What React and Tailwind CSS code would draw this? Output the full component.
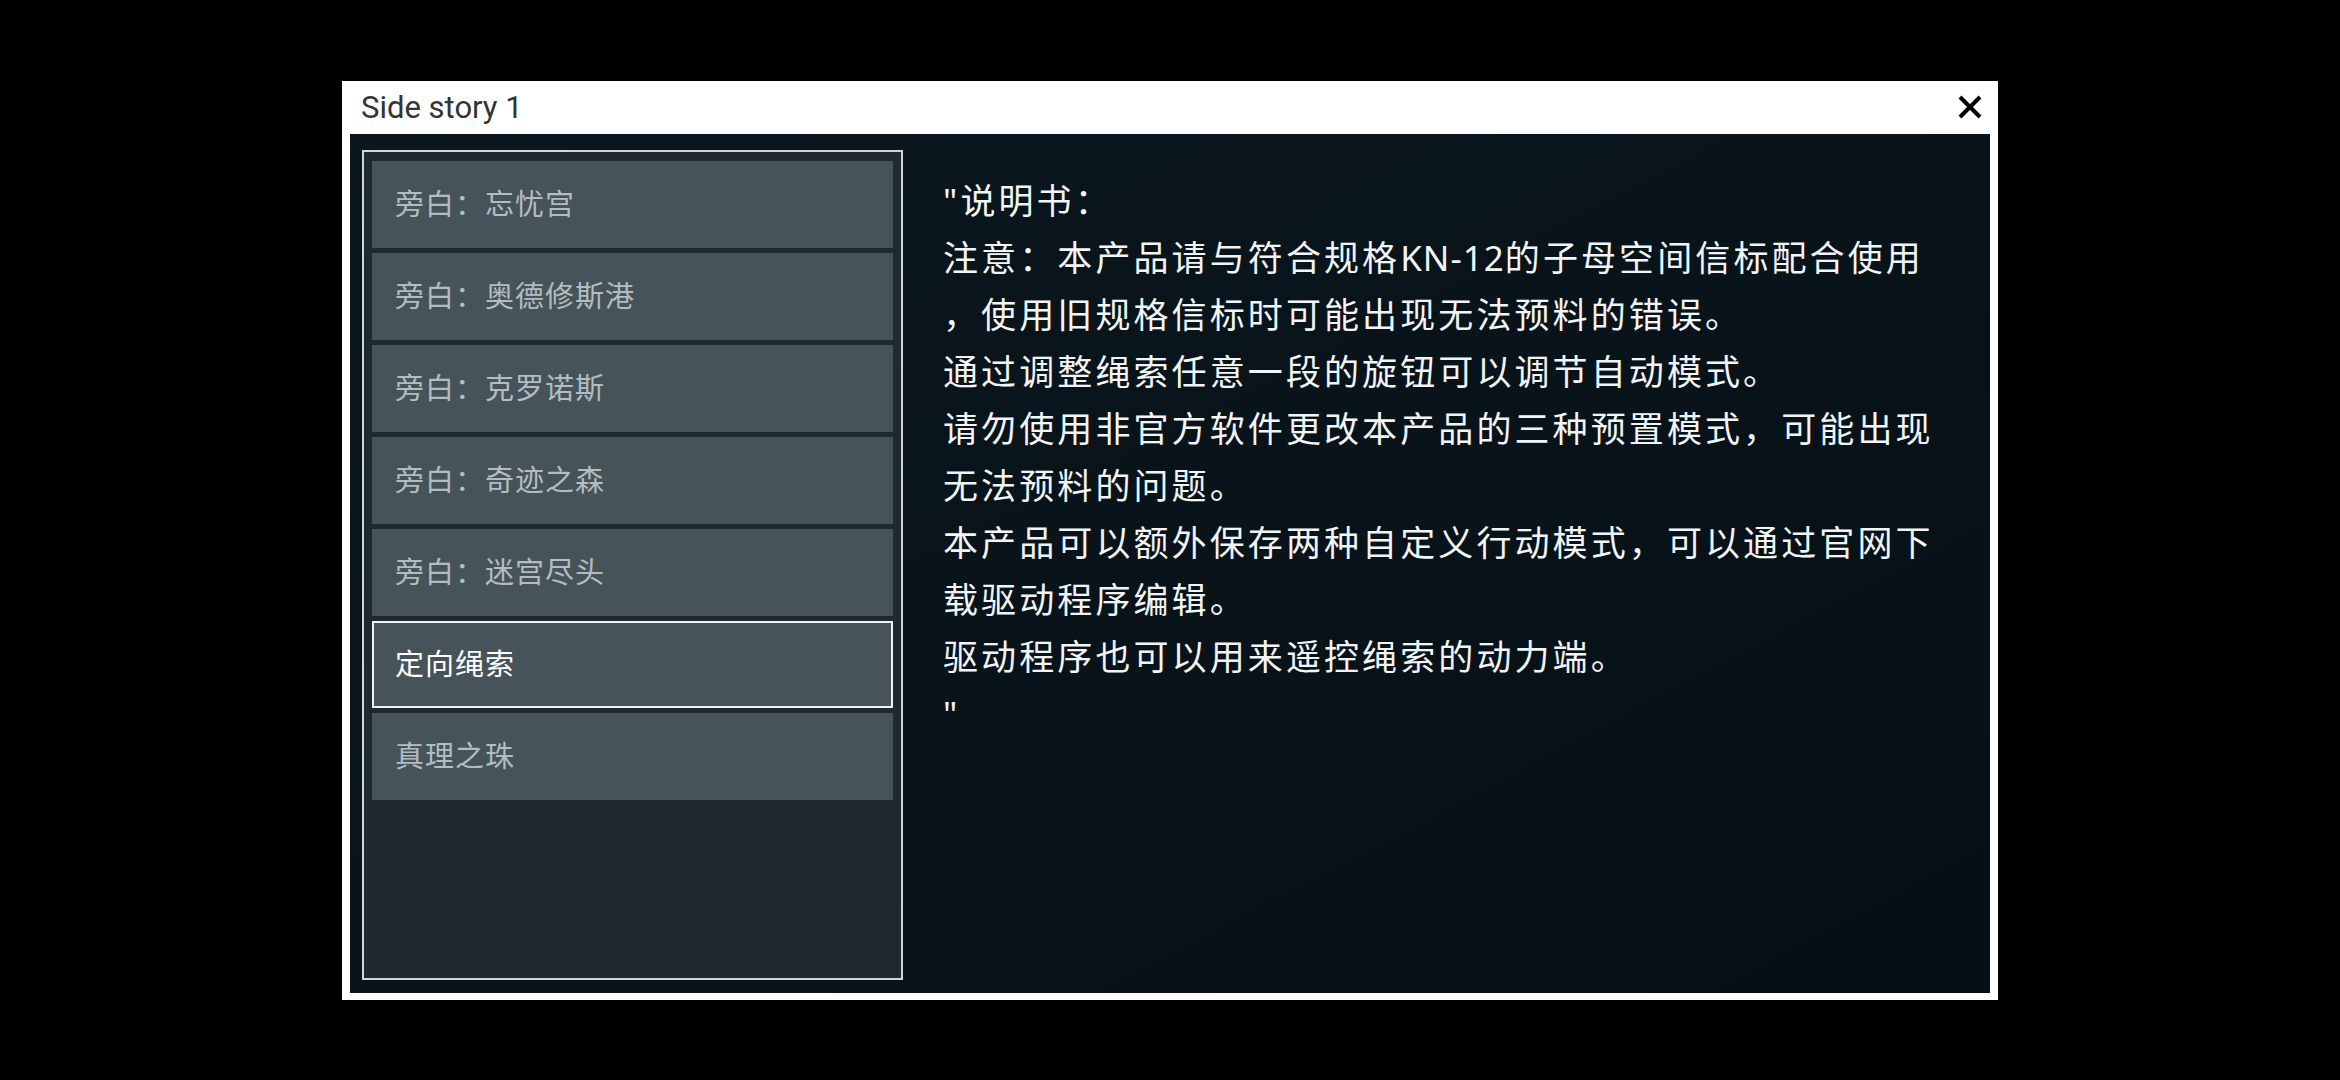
// ---------------------------- Data ----------------------------
const entries = [
    "旁白：忘忧宫",
    "旁白：奥德修斯港",
    "旁白：克罗诺斯",
    "旁白：奇迹之森",
    "旁白：迷宫尽头",
    "定向绳索",
    "真理之珠",
];

const selectedIndex = 5;

// each visual line of the reading pane, kept as in the game
const lines = [
    "\"说明书：",
    null, // line with the KN-12 code, rendered below
    "，使用旧规格信标时可能出现无法预料的错误。",
    "通过调整绳索任意一段的旋钮可以调节自动模式。",
    "请勿使用非官方软件更改本产品的三种预置模式，可能出现",
    "无法预料的问题。",
    "本产品可以额外保存两种自定义行动模式，可以通过官网下",
    "载驱动程序编辑。",
    "驱动程序也可以用来遥控绳索的动力端。",
    "\"",
];

const cjk = "font-['Noto_Sans','Noto_Sans_CJK_SC',sans-serif]";

// ---------------------------- Pieces ----------------------------
const CloseIcon = () => (
    <svg width="24" height="24" viewBox="0 0 24 24" className="block">
        <path d="M2 2 L22 22 M22 2 L2 22" stroke="#000" strokeWidth="4" fill="none" />
    </svg>
);

const EntryRow = ({ label, active }) => (
    <div
        className={
            active
                ? "h-[87px] flex items-center pl-[21px] bg-[#46545a] text-[29px] tracking-[1px] text-white border-2 border-[#eef2f3]"
                : "h-[87px] flex items-center pl-[23px] bg-[#46545a] text-[29px] tracking-[1px] text-[#b2bdc1]"
        }
    >
        {label}
    </div>
);

// ---------------------------- App ----------------------------
const App = () => {
    return (
        <div className="w-[2340px] h-[1080px] bg-black flex items-center justify-center">
            {/* Window */}
            <div className="w-[1656px] h-[919px] bg-white flex flex-col px-[8px] pb-[7px]">
                {/* Title bar */}
                <div className="h-[53px] flex items-center justify-between pl-[11px] pr-[8px]">
                    <span className="font-['Roboto',sans-serif] text-[31px] text-[#333] leading-none pt-[1px]">
                        Side story 1
                    </span>
                    <CloseIcon />
                </div>

                {/* Body */}
                <div className="flex-1 flex bg-gradient-to-br from-[#0b171e] via-[#08131a] to-[#050f16] pl-[12px] pt-[16px] pb-[13px]">
                    {/* Entry list */}
                    <div className={`w-[541px] border-2 border-[#cdd6d9] bg-[#1e2a30] pt-[9px] px-[8px] flex flex-col gap-[5px] ${cjk}`}>
                        {entries.map((label, idx) => (
                            <EntryRow key={idx} label={label} active={idx === selectedIndex} />
                        ))}
                    </div>

                    {/* Reading pane */}
                    <div className={`ml-[40px] pt-[22px] text-[35px] leading-[57px] tracking-[3.1px] text-[#f2f4f5] ${cjk}`}>
                        {lines.map((line, idx) =>
                            line === null ? (
                                <div key={idx} className="whitespace-nowrap">
                                    注意：本产品请与符合规格<span className="tracking-[1px]">KN-12</span>的子母空间信标配合使用
                                </div>
                            ) : (
                                <div key={idx} className="whitespace-nowrap">
                                    {line}
                                </div>
                            )
                        )}
                    </div>
                </div>
            </div>
        </div>
    );
};

export default App;
